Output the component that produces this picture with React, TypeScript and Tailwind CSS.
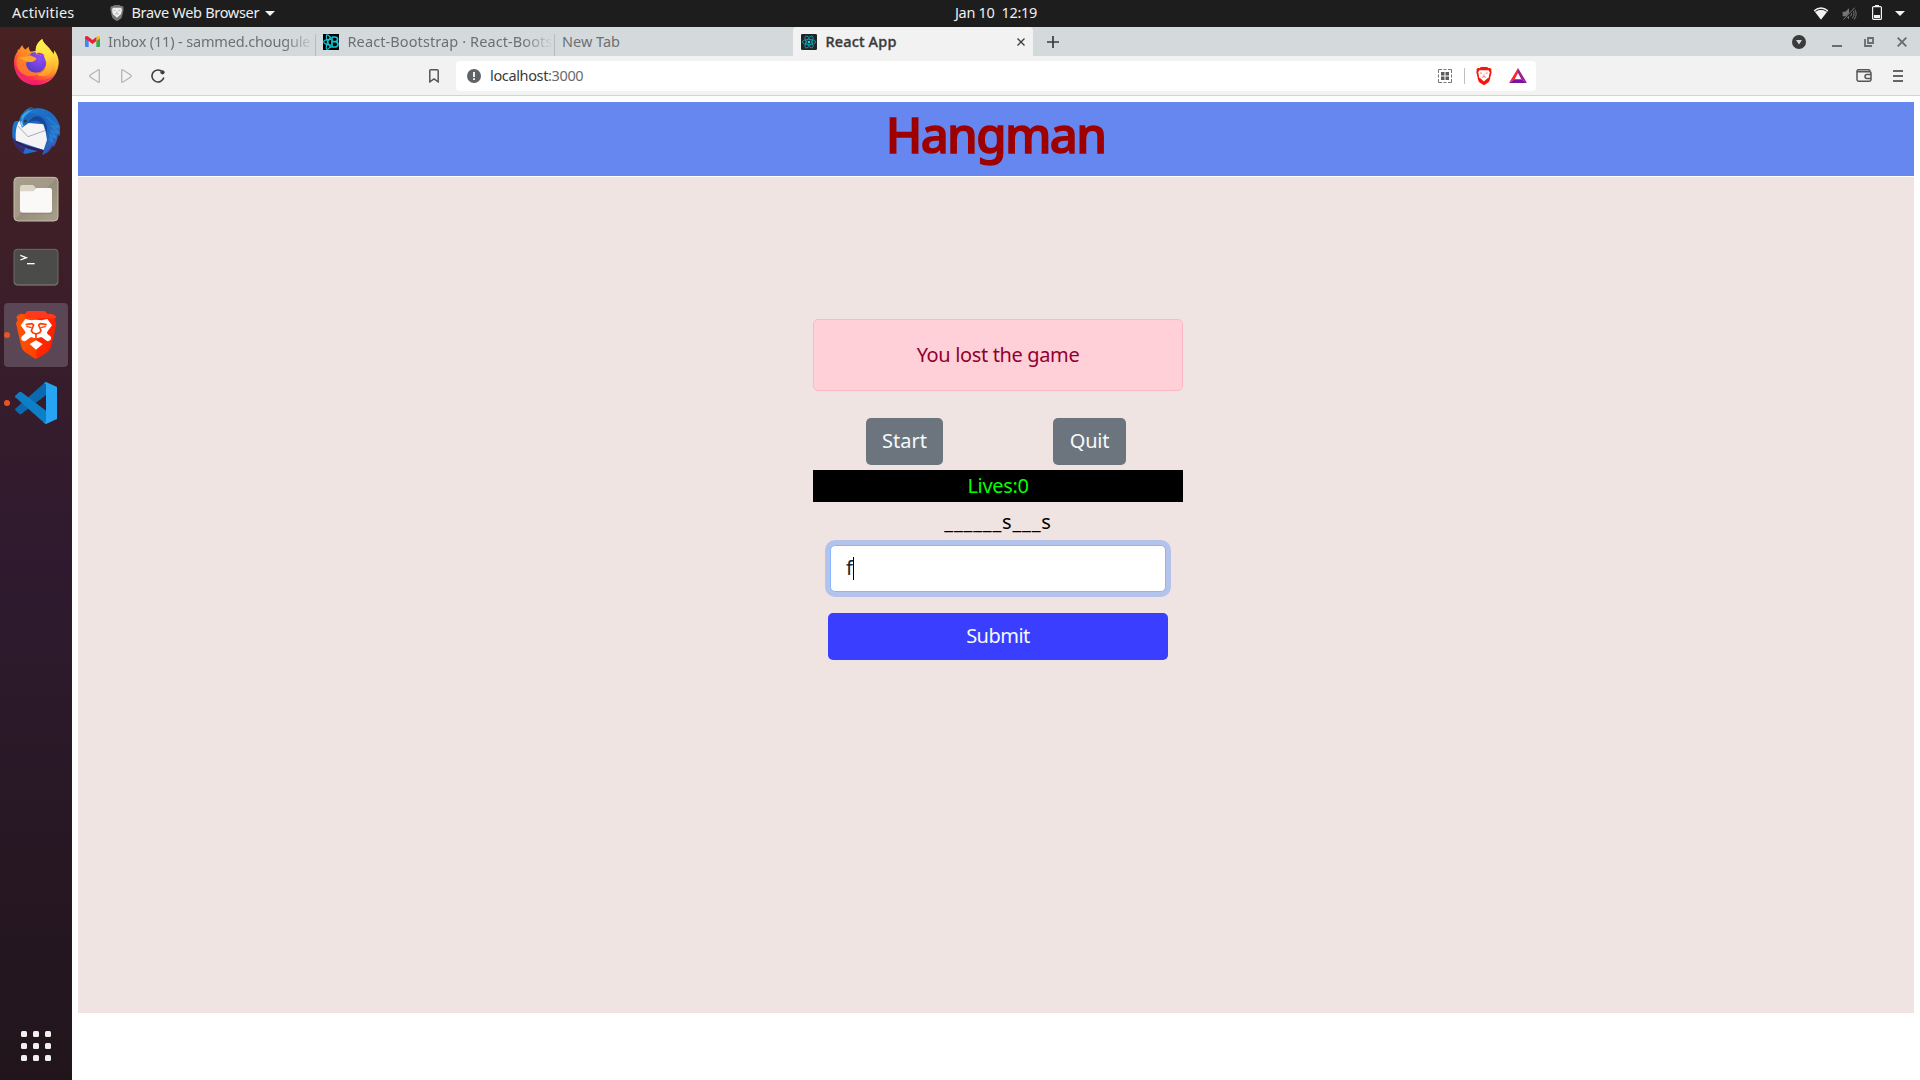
import React from "react";

function FirefoxIcon() {
  return (
    <svg viewBox="36 117 144 144" className="size-12">
      <defs>
        <linearGradient id="fxBody" x1="0.85" y1="0.1" x2="0.2" y2="0.95">
          <stop offset="0" stopColor="#fff44f" />
          <stop offset="0.3" stopColor="#ffbd2f" />
          <stop offset="0.55" stopColor="#ff7a2a" />
          <stop offset="0.8" stopColor="#ff3647" />
          <stop offset="1" stopColor="#e31587" />
        </linearGradient>
        <radialGradient id="fxGlobe" cx="0.65" cy="0.3" r="0.8">
          <stop offset="0" stopColor="#8f4df0" />
          <stop offset="0.5" stopColor="#7542e5" />
          <stop offset="1" stopColor="#4a3fb8" />
        </radialGradient>
        <linearGradient id="fxFlame" x1="0.3" y1="0" x2="0.5" y2="1">
          <stop offset="0" stopColor="#fff44f" />
          <stop offset="0.5" stopColor="#ffe141" />
          <stop offset="1" stopColor="#ff9a2b" />
        </linearGradient>
        <linearGradient id="fxBottom" x1="0" y1="0" x2="1" y2="0">
          <stop offset="0" stopColor="#ff3a50" />
          <stop offset="0.5" stopColor="#ef1375" />
          <stop offset="1" stopColor="#ff5a3c" />
        </linearGradient>
      </defs>
      <path
        d="M67 136 C68 142 72 146 76 149 L86 140 C86 146 88 151 92 155 L108 152 C106 138 114 126 127 117 C129 130 143 138 151 149 C156 155 160 159 161 163 L163 151 C172 163 177 178 176 190 C173 229 145 255 108 255 C71 255 43 229 42 190 C41 176 46 163 52 155 L54 147 L57 150 C60 144 64 139 67 136Z"
        fill="url(#fxBody)"
      />
      <path d="M47 215 C58 240 82 255 108 255 C138 255 162 238 171 212 C158 232 138 241 112 241 C84 242 62 234 47 215Z" fill="url(#fxBottom)" opacity="0.8" />
      <circle cx="108" cy="187" r="31" fill="url(#fxGlobe)" />
      <path
        d="M108 163 C104 143 112 126 127 117 C129 130 143 138 151 149 C170 173 168 206 148 223 C134 232 114 229 112 222 C132 220 142 202 138 186 C136 176 130 170 134 166 C126 164 122 166 122 168 C119 165 113 162 108 163Z"
        fill="url(#fxFlame)"
        opacity="0.92"
      />
      <path d="M108 163 C112 156 125 157 134 166 C126 164 122 166 122 168 C119 165 113 162 108 163Z" fill="#a838d8" />
      <path d="M67 136 C68 142 72 146 76 149 L86 140 C86 146 88 151 92 155 L91 165 C98 170 106 171 109 176 C106 183 96 186 91 186 C82 184 76 188 79 199 C87 220 106 220 122 217 C98 238 60 228 50 197 C48 180 55 163 62 155 Z" fill="#ff8a25" opacity="0.72" />
      <path d="M58 173 C68 169 82 170 91 167 C98 170 106 171 109 176 C106 183 96 186 91 186 C77 184 66 180 58 173Z" fill="#ffa52d" />
    </svg>
  );
}

function ThunderbirdIcon() {
  return (
    <svg viewBox="36 321 144 144" className="size-12">
      <defs>
        <linearGradient id="tbBody" x1="0.1" y1="0" x2="0.9" y2="1">
          <stop offset="0" stopColor="#1f7dd0" />
          <stop offset="0.45" stopColor="#1d6cc4" />
          <stop offset="0.75" stopColor="#2b6fc9" />
          <stop offset="1" stopColor="#3c3f9f" />
        </linearGradient>
      </defs>
      <path
        d="M66 343 C75 330 86 323 94 322 L104 326 C136 320 166 341 176 369 L180 378 L179 408 L174 404 C172 420 168 430 162 440 L157 438 C150 452 139 463 126 464 L132 449 L75 462 C55 452 40 432 37 408 C36 390 37 375 43 365 C47 363 52 362 57 362 C60 354 62 348 66 343Z"
        fill="url(#tbBody)"
      />
      <path d="M46 420 C52 433 62 440 76 444 L68 462 L74 463 C55 452 42 438 38 414Z" fill="#382a6e" />
      <path d="M66 383 C72 372 85 368 96 370 C114 369 128 375 134 392 L132 449 C142 440 147 424 149 410 C153 380 140 352 112 343 C96 338 80 338 70 345 C62 354 60 368 66 383Z" fill="#1e66bd" />
      <path d="M84 369 C98 358 124 360 134 380 C138 390 138 398 137 404 C146 386 140 358 116 349 C103 346 91 355 84 369Z" fill="#15489a" />
      <path d="M58 362 L66 383 L86 369 L130 373 L137 396 L141 420 L131 450 L48 422 C46 402 47 380 58 362Z" fill="#f4f4f6" />
      <path d="M54 378 L84 410 L137 391" fill="none" stroke="#85858b" strokeWidth="2" />
      <path d="M48 422 L78 436 L131 450 L126 456 C98 450 70 444 48 428Z" fill="#33205a" />
      <path d="M140 352 L176 382 L156 378 L176 398 L154 393 L168 414 L149 404 L158 426 L145 417" fill="none" stroke="#2aa2de" strokeWidth="4" opacity="0.45" />
      <path d="M64 350 C72 338 84 330 98 329 C86 338 76 344 70 356 L66 372Z" fill="#3fa4e4" />
      <path d="M60 366 L65 362 L70 376 L66 383Z" fill="#7cc4ea" />
      <circle cx="76" cy="363" r="4.5" fill="#2e3a4a" />
      <path d="M84 325 L94 321 L102 327 L94 330Z" fill="#39516b" />
    </svg>
  );
}

function FilesIcon() {
  return (
    <svg viewBox="36 45 144 144" className="size-12">
      <defs>
        <linearGradient id="flBase" x1="0" y1="0" x2="1" y2="1">
          <stop offset="0" stopColor="#a79f8a" />
          <stop offset="0.49" stopColor="#a29a86" />
          <stop offset="0.5" stopColor="#968e7a" />
          <stop offset="1" stopColor="#a9a08c" />
        </linearGradient>
      </defs>
      <rect x="42" y="52" width="132" height="131" rx="12" fill="url(#flBase)" stroke="#c5bfae" strokeWidth="3" />
      <path d="M60 82 Q60 75 67 75 L97 75 Q101 75 103 79 L107 84 L107 100 L60 100Z" fill="#d9d6c8" />
      <path d="M60 94 L98 94 Q102 94 104 90 L106 86 Q108 84 112 84 L149 84 Q156 84 156 91 L156 151 Q156 158 149 158 L67 158 Q60 158 60 151Z" fill="#faf9f7" />
      <path d="M61 160 L155 160" stroke="#857d6b" strokeWidth="2" />
    </svg>
  );
}

function TerminalIcon() {
  return (
    <svg viewBox="36 249 144 144" className="size-12">
      <rect x="42" y="268" width="132" height="107" rx="9" fill="#4b4b4a" stroke="#6c6a69" strokeWidth="3" />
      <path d="M43 366 Q44 375 52 375 L164 375 Q173 375 173 366" fill="none" stroke="#80807e" strokeWidth="2" />
      <path d="M61 286 L79 293 L61 300" fill="none" stroke="#fff" strokeWidth="4" />
      <path d="M81 311 H104" stroke="#fff" strokeWidth="4" />
    </svg>
  );
}

const SHIELD =
  "M84 453 L134 453 L143 463 C150 459 160 461 169 471 L165 481 L169 492 L154 556 C152 565 149 571 142 576 L115 594 C110 597 107 597 102 594 L75 576 C68 571 65 565 63 556 L48 490 L53 480 L49 471 C56 461 66 459 74 463Z";
const FACE =
  "M76 477 L93 481 Q108 477 125 481 L142 477 L156 496 L143 514 Q138 520 146 525 Q155 529 153 538 Q148 545 141 543 L124 531 Q108 538 93 531 L76 543 Q67 545 64 538 Q62 529 71 525 Q79 520 75 514 L62 496Z";
const CHIN = "M108 541 L128 552 L108 569 L89 552Z";

function BraveDockIcon() {
  return (
    <svg viewBox="36 453 144 144" className="size-12">
      <defs>
        <linearGradient id="brBody" x1="0" y1="0" x2="1" y2="0">
          <stop offset="0" stopColor="#ff5601" />
          <stop offset="0.5" stopColor="#ff4000" />
          <stop offset="0.51" stopColor="#ff2a00" />
          <stop offset="1" stopColor="#ff1f01" />
        </linearGradient>
      </defs>
      <path d={SHIELD} fill="url(#brBody)" />
      <path d="M84 453 L134 453 L143 463 C150 459 160 461 169 471 L160 477 L142 474 L76 474 L74 463Z" fill="#ff3a1c" />
      <path d={FACE} fill="#fff" />
      <g fill="none" stroke="#ff3d06" strokeWidth="5" strokeLinejoin="round">
        <path d="M77 494 L96 491 L101 495 L94 512 L98 518 L108 522 L119 518 L123 512 L116 495 L121 491 L140 494" />
        <path d="M79 499 L95 503 M138 499 L122 503" strokeWidth="4" />
        <path d="M108 522 V536" />
      </g>
      <path d={CHIN} fill="#fff" />
    </svg>
  );
}

function VsCodeIcon() {
  return (
    <svg viewBox="36 657 144 144" className="size-12">
      <path d="M45 749 L57 761 Q61 764 65 761 L138 705 L138 666 L133 669 L46 746Z" fill="#0b69ad" />
      <path d="M45 708 L57 697 Q61 694 65 697 L138 752 L138 792 L133 789 L46 712Z" fill="#0d7fc9" />
      <path d="M138 666 L171 681 L171 777 L138 792 Q134 790 132 787 Q138 788 138 784 L138 673 Q138 669 132 671 Q134 667 138 666Z" fill="#27a5f2" />
    </svg>
  );
}

function TinyLion({ className, shell, face }: { className: string; shell: string; face: string }) {
  return (
    <svg viewBox="46 453 126 144" preserveAspectRatio="none" className={className}>
      <path d={SHIELD} fill={shell} />
      <path d="M72 478 L145 478 L154 495 L146 535 L108 568 L71 535 L64 495Z" fill={face} />
      <path d="M78 500 L94 504 M122 504 L139 500 M92 536 L108 530 L125 536 M108 512 V530" stroke={shell} strokeWidth="6" fill="none" opacity="0.75" />
    </svg>
  );
}

function GmailIcon() {
  return (
    <svg viewBox="0 0 45 33" className="h-[11px] w-[15px] shrink-0">
      <path d="M0 5 V30 Q0 33 3 33 H11 V14Z" fill="#4285f4" />
      <path d="M34 14 V33 H42 Q45 33 45 30 V6Z" fill="#34a853" />
      <path d="M34 4 V15 L45 7 V4 Q43 -2 37 1Z" fill="#fbbc04" />
      <path d="M0 4 Q2 -2 8 1 L22.500 12 L34 3 V15 L22.500 24 L11 15 L0 8Z" fill="#ea1f35" />
    </svg>
  );
}

function Orbits({ stroke, width }: { stroke: string; width: number }) {
  return (
    <g fill="none" stroke={stroke} strokeWidth={width}>
      <ellipse cx="24" cy="24" rx="20" ry="8" />
      <ellipse cx="24" cy="24" rx="20" ry="8" transform="rotate(60 24 24)" />
      <ellipse cx="24" cy="24" rx="20" ry="8" transform="rotate(120 24 24)" />
    </g>
  );
}

function ReactBootstrapIcon() {
  return (
    <svg viewBox="0 0 48 48" className="size-4 shrink-0">
      <rect width="48" height="48" fill="#000" />
      <g fill="none" stroke="#14c5d4" strokeWidth="3.500">
        <path d="M24 16 C12 16 2 19 2 24 C2 29 12 33 24 33" />
        <path d="M24 13 C18 3 11 0 10 5 C9 14 15 31 24 41" />
        <path d="M24 35 C18 45 11 49 10 43 C9 34 15 17 24 8" />
        <path d="M27 9 H36 C46 9 46 23 36 23 H27 M36 23 C48 23 48 39 37 39 H27 V9" strokeWidth="5" />
      </g>
    </svg>
  );
}

function ReactIcon() {
  return (
    <svg viewBox="0 0 48 48" className="size-4 shrink-0">
      <rect width="48" height="48" rx="4" fill="#222425" />
      <Orbits stroke="#0f9eb0" width={2.6} />
      <circle cx="24" cy="24" r="4" fill="#19d3ea" />
    </svg>
  );
}

function TopBar() {
  return (
    <header className="flex h-[27px] shrink-0 items-center bg-[#1d1d1d] text-[14.5px] leading-[24px] text-[#efefef]">
      <div className="grid w-full grid-cols-[1fr_auto_1fr] items-center">
        <div className="flex items-center">
          <span className="ml-3 h-[27px] w-[98px] tracking-[0.2px]">Activities</span>
          <TinyLion className="-mt-px h-4 w-[14px]" shell="#777777" face="#eeeeee" />
          <span className="ml-[7.5px] h-[27px] tracking-[-0.3px]">Brave Web Browser</span>
          <svg viewBox="0 0 10 5" className="ml-[6px] h-[5px] w-[10px]">
            <path d="M0 0H10L5 5Z" fill="#f2f2f2" />
          </svg>
        </div>
        <div className="relative left-[36px] h-[27px] tracking-[-0.3px]">{"Jan 10\u00a0\u00a012:19"}</div>
        <div className="flex items-center justify-end pr-[15px]">
          <svg viewBox="0 0 48 39" className="h-[13px] w-4">
            <path d="M2 10 Q24 -8 46 10 L24 38Z" fill="#f2f2f2" />
            <path d="M7 13 Q24 1 41 13" fill="none" stroke="#1d1d1d" strokeWidth="3" />
          </svg>
          <svg viewBox="0 0 45 42" className="ml-[13px] h-[14px] w-[15px]">
            <path d="M2 14 H10 L21 4 V37 L10 28 H2Z" fill="#777" />
            <path d="M26 14 Q31 21 26 28 M32 9 Q41 21 31 34 M36 4 Q49 21 36 38" stroke="#777" strokeWidth="3" fill="none" />
            <path d="M4 40 L40 2" stroke="#1d1d1d" strokeWidth="5" />
            <path d="M4 38 L38 2" stroke="#858585" strokeWidth="2.500" />
          </svg>
          <svg viewBox="0 0 10 15" className="-mt-[2px] ml-[15px] h-[15px] w-[10px]">
            <path d="M3 0H7V2H3Z" fill="#f2f2f2" />
            <rect x="0.600" y="1.600" width="8.800" height="12.800" rx="1" fill="none" stroke="#f2f2f2" strokeWidth="1.200" />
            <path d="M2 10H8V13H2Z" fill="#f2f2f2" />
          </svg>
          <svg viewBox="0 0 10 5" className="ml-[13px] h-[5px] w-[10px]">
            <path d="M0 0H10L5 5Z" fill="#f2f2f2" />
          </svg>
        </div>
      </div>
    </header>
  );
}

function DockTile({ active, running, children }: { active?: boolean; running?: boolean; children: React.ReactNode }) {
  return (
    <div className={active ? "relative flex size-16 items-center justify-center rounded bg-[#5b4655]" : "relative flex size-16 items-center justify-center"}>
      {running && <span className="absolute top-[29px] left-0 size-[6px] rounded-full bg-[#e95420]" />}
      {children}
    </div>
  );
}

function Dock() {
  return (
    <aside className="flex w-[72px] shrink-0 flex-col items-center justify-between bg-linear-to-b from-[#482121] via-[#2f1a2f] to-[#21151b] pt-1 pb-[19px]">
      <div className="flex flex-col gap-1">
        <DockTile><FirefoxIcon /></DockTile>
        <DockTile><ThunderbirdIcon /></DockTile>
        <DockTile><FilesIcon /></DockTile>
        <DockTile><TerminalIcon /></DockTile>
        <DockTile active running><BraveDockIcon /></DockTile>
        <DockTile running><VsCodeIcon /></DockTile>
      </div>
      <div className="grid grid-cols-3 gap-[6px]">
        {Array.from({ length: 9 }, (_, i) => (
          <span key={i} className="size-[6px] rounded-[1.5px] bg-[#f2f0ee]" />
        ))}
      </div>
    </aside>
  );
}

function TabStrip() {
  return (
    <div className="flex h-[29px] shrink-0 items-center bg-[#d4d9dc] pl-1 text-[14.5px] leading-[29px] text-[#6d7072]">
      <div className="relative flex h-full w-[239px] items-center pl-[9px]">
        <GmailIcon />
        <span className="ml-2 h-[29px] w-[207px] shrink-0 mask-r-from-85% tracking-[-0.16px] whitespace-nowrap">
          Inbox (11) - sammed.chougule
        </span>
      </div>
      <div className="flex h-full w-[239px] items-center">
        <i className="mt-[7px] h-[22px] w-px bg-[#b9bcbe]" />
        <span className="ml-[7px] flex"><ReactBootstrapIcon /></span>
        <span className="ml-[8.5px] h-[29px] w-[205px] shrink-0 mask-r-from-85% tracking-[0.1px] whitespace-nowrap">
          React-Bootstrap · React-Boots
        </span>
      </div>
      <div className="flex h-full w-[239px] items-center">
        <i className="mt-[7px] h-[22px] w-px bg-[#b9bcbe]" />
        <span className="ml-[7px] h-[29px]">New Tab</span>
      </div>
      <div className="flex h-full w-[240px] items-center rounded-t bg-[#f2f2f2] pl-2 text-[#3b3b3b]">
        <ReactIcon />
        <span className="ml-[8.5px] h-[29px] flex-1 font-medium tracking-[0.15px] [-webkit-text-stroke:0.35px_#3b3b3b]">React App</span>
        <svg viewBox="0 0 8 8" className="mr-2 size-2">
          <path d="M0.500 0.500L7.500 7.500M7.500 0.500L0.500 7.500" stroke="#3b3b3b" strokeWidth="1.300" />
        </svg>
      </div>
      <svg viewBox="0 0 12 12" className="ml-[14px] size-3">
        <path d="M6 0V12M0 6H12" stroke="#3b3b3b" strokeWidth="1.700" />
      </svg>
      <div className="ml-auto flex items-center pr-[13px]">
        <svg viewBox="0 0 14 14" className="size-[14px]">
          <circle cx="7" cy="7" r="7" fill="#3b3b3b" />
          <path d="M4 5H10L7 9.500Z" fill="#d4d9dc" />
        </svg>
        <svg viewBox="0 0 10 10" className="ml-[26px] size-[10px]">
          <path d="M0 9H10" stroke="#6a6c6e" strokeWidth="2" />
        </svg>
        <svg viewBox="0 0 10 10" className="ml-[22px] size-[10px]">
          <path d="M4 1H9V6H4Z M1 2V9H8" fill="none" stroke="#6a6c6e" strokeWidth="1.800" />
        </svg>
        <svg viewBox="0 0 10 10" className="ml-[23px] size-[10px]">
          <path d="M0.700 0.700L9.300 9.300M9.300 0.700L0.700 9.300" stroke="#6a6c6e" strokeWidth="1.900" />
        </svg>
      </div>
    </div>
  );
}

function Toolbar() {
  return (
    <div className="flex h-10 shrink-0 items-center border-b border-[#d3d4d6] bg-[#f2f2f2]">
      <svg viewBox="0 0 11 14" className="ml-[17px] h-[14px] w-[11px]">
        <path d="M9.300 0.800Q10.300 0.500 10.300 1.600V12.400Q10.300 13.500 9.300 13.200L1.300 8Q0.300 7 1.300 6Z" fill="none" stroke="#b5b5b5" strokeWidth="1.300" />
      </svg>
      <svg viewBox="0 0 11 14" className="ml-[20.500px] h-[14px] w-[11px]">
        <path d="M1.700 0.800Q0.700 0.500 0.700 1.600V12.400Q0.700 13.500 1.700 13.200L9.700 8Q10.700 7 9.700 6Z" fill="none" stroke="#b5b5b5" strokeWidth="1.300" />
      </svg>
      <svg viewBox="0 0 14 14" className="ml-[19.500px] size-[14px]">
        <path d="M11.500 3A6 6 0 1 0 12.800 8.500" fill="none" stroke="#3f3f3f" strokeWidth="1.600" />
        <circle cx="11.500" cy="3.300" r="2.100" fill="#3f3f3f" />
      </svg>
      <svg viewBox="0 0 10 14" className="ml-[264px] h-[14px] w-[10px]">
        <path d="M0.800 12.800V1.800Q0.800 0.800 1.800 0.800H8.200Q9.200 0.800 9.200 1.800V12.800L5 9.800Z" fill="none" stroke="#555" strokeWidth="1.500" />
      </svg>
      <div className="ml-[17px] flex h-[30px] w-[1080px] items-center rounded bg-white pl-[11px]">
        <svg viewBox="0 0 14 14" className="size-[14px]">
          <circle cx="7" cy="7" r="7" fill="#5f6368" />
          <path d="M6.100 3H7.900V8H6.100ZM6.100 9.300H7.900V11H6.100Z" fill="#fff" />
        </svg>
        <span className="ml-[9px] h-[30px] text-[14.5px] leading-[29px] tracking-[-0.36px] text-[#3a3a3a]">
          localhost<span className="text-[#6b6b6b]">:3000</span>
        </span>
        <svg viewBox="0 0 14 14" className="ml-auto size-[14px]">
          <path d="M0.500 4V0.500H4M5.500 0.500H8.500M10 0.500H13.500V4M13.500 5.500V8.500M13.500 10V13.500H10M8.500 13.500H5.500M4 13.500H0.500V10M0.500 8.500V5.500" fill="none" stroke="#777" />
          <path d="M3 3H6.500V6.500H3ZM7.500 3H11V6.500H7.500ZM3 7.500H6.500V11H3ZM7.500 7.500H11V11H7.500Z" fill="#5d5d5d" />
        </svg>
        <i className="ml-3 h-4 w-px bg-[#bdbfc1]" />
        <TinyLion className="ml-[11px] h-[18px] w-4" shell="#f6160c" face="#ffffff" />
        <svg viewBox="0 0 54 45" className="mr-[9px] ml-[17px] h-[15px] w-[18px]">
          <path d="M27 0L0 45L17 34L27 15Z" fill="#ff2331" />
          <path d="M27 0L54 45L37 34L27 15Z" fill="#9e1f8f" />
          <path d="M0 45H54L37 34H17Z" fill="#7a0fa0" />
        </svg>
      </div>
      <svg viewBox="0 0 16 13" className="ml-auto h-[13px] w-4">
        <path d="M1 2.500Q1 0.800 2.500 0.800H12.500Q14 0.800 14 2.500M1 2.500V10.500Q1 12.200 2.500 12.200H13.500Q15 12.200 15 10.500V4Q15 2.800 13.500 2.800H1.500M15.500 5.500H11Q9 5.500 9 7.500Q9 9.500 11 9.500H15.500" fill="none" stroke="#555" strokeWidth="1.500" />
      </svg>
      <svg viewBox="0 0 10 12" className="mr-[17px] ml-[21px] h-3 w-[10px]">
        <path d="M0 1H10M0 6H10M0 11H10" stroke="#666" strokeWidth="2" />
      </svg>
    </div>
  );
}

function Page() {
  return (
    <div className="flex flex-1 flex-col bg-white px-[6px] pt-[6px] text-xl leading-[30px] text-[#212529]">
      <h1 className="mb-px h-[74px] bg-[#6687f0] pr-px text-center text-[49px] leading-[65px] font-medium tracking-[-1.6px] text-[#9e0000] [-webkit-text-stroke:1.500px_#9e0000]">
        Hangman
      </h1>
      <main className="flex h-[836px] flex-col items-center bg-[#f0e4e3] pt-[142px]">
        <div className="ml-1 w-[370px] text-center">
          <div className="mb-[27px] h-[72px] rounded-[5px] border border-[#ffb7c3] bg-[#ffd0d8] pt-[20px] tracking-[-0.36px] text-[#8f0030]">
            You lost the game
          </div>
          <div className="flex pl-[53px] text-[#f8f9fa]">
            <button className="h-[47px] w-[77px] rounded-[5px] bg-[#6c757d] pb-[2px]">Start</button>
            <button className="ml-[110px] h-[47px] w-[73px] rounded-[5px] bg-[#6c757d] pb-[2px] tracking-[-0.2px]">Quit</button>
          </div>
          <div className="mt-[5px] h-8 bg-black pt-px tracking-[-0.34px] text-[#00ff00]">Lives:0</div>
          <div className="h-[43px] pt-[5px] tracking-[0.75px] text-black">______s___s</div>
          <div className="mx-[17px] flex h-[47px] items-center rounded-[5px] border border-[#86b7fe] bg-white pb-px pl-[15px] text-left ring-5 ring-[#b4c3ec]">
            f<i className="h-[23px] w-px bg-black" />
          </div>
          <button className="mt-[21px] h-[47px] w-[340px] rounded-[5px] bg-[#3a3fff] pb-[2px] tracking-[-0.5px] text-[#f8f9fa]">Submit</button>
        </div>
      </main>
    </div>
  );
}

export default function App() {
  return (
    <div className="flex h-[1080px] w-[1920px] flex-col overflow-hidden font-['Noto_Sans','Open_Sans',sans-serif]">
      <TopBar />
      <div className="flex min-h-0 flex-1">
        <Dock />
        <div className="flex min-w-0 flex-1 flex-col">
          <TabStrip />
          <Toolbar />
          <Page />
        </div>
      </div>
    </div>
  );
}
